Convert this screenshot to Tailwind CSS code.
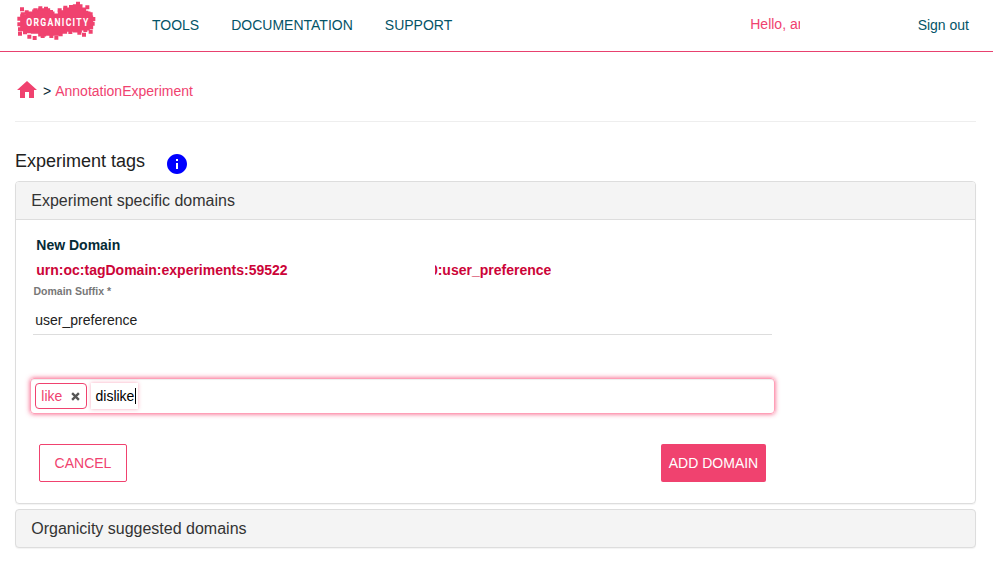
<!DOCTYPE html>
<html lang="en">
<head>
<meta charset="utf-8">
<title>Organicity - Experiment tags</title>
<script src="https://cdn.jsdelivr.net/npm/@tailwindcss/browser@4"></script>
</head>
<body class="bg-white text-[14px] leading-5 text-[#212121] font-['Liberation_Sans',Arial,sans-serif] h-[564px] overflow-hidden">
<header class="h-[52px] border-b border-[#e8416f] flex items-start text-[#045467]">
  <svg class="ml-[10px] w-[95px] h-[50px] shrink-0" viewBox="0 0 285 150" role="img" aria-label="Organicity">
    <g fill="#f0426f" stroke="#f0426f">
      <path stroke-width="7" d="M34 46H50V38H70V32H86V28H117V38H130V44H147V34H163V26H192V16H214V26H225V38H238V50H246V84H236V88H212V94H192V92H168V98H147V104H105V106H88V98H66V96H48V90H34Z"/>
      <path fill="none" stroke-width="12" stroke-linecap="square" d="M28 56h0M28 73h0M38 43h0M36 28h0M50 37h0M76 31h0M91 25h0M108 26h0M123 36h0M149 31h0M166 23h0M183 21h0M204 11h0M232 22h0M229 38h0M242 43h0M250 57h0M248 71h0M242 95h0M226 90h0M222 104h0M208 98h0M181 96h0M152 103h0M139 113h0M124 108h0M98 108h0M74 114h0M58 110h0M45 97h0M30 101h0M30 88h0"/>
    </g>
    <g transform="translate(49 79) scale(.74 1)"><text fill="#fff" font-family="Roboto, sans-serif" font-size="35" font-weight="700" textLength="251">ORGANICITY</text></g>
  </svg>
  <nav class="ml-[47px] pt-[15px] flex gap-8"><a>TOOLS</a><a>DOCUMENTATION</a><a>SUPPORT</a></nav>
  <span class="ml-[298px] mt-[14px] w-[50px] overflow-hidden whitespace-nowrap text-[#f0426f]">Hello, an</span>
  <a class="ml-auto mr-6 pt-[15px]">Sign out</a>
</header>
<main class="ml-[15px] w-[961px]">
  <div class="h-[70px] border-b border-[#eee] flex pt-[26px]">
    <svg class="w-6 h-6" viewBox="0 0 24 24" fill="#f0426f"><path d="M10 20v-6h4v6h5v-8h3L12 3 2 12h3v8z"/></svg>
    <span class="ml-1 mt-[3px] text-[#052a36]">&gt;</span><a class="ml-1 mt-[3px] text-[#f0426f]">AnnotationExperiment</a>
  </div>
  <div class="h-[59px] flex pt-[29px]">
    <h1 class="text-[18px] leading-5">Experiment tags</h1>
    <svg class="ml-5 mt-px w-6 h-6" viewBox="0 0 24 24" fill="#00f"><path d="M12 2C6.480 2 2 6.480 2 12s4.480 10 10 10 10-4.480 10-10S17.520 2 12 2zm1 15h-2v-6h2v6zm0-8h-2V7h2v2z"/></svg>
  </div>
  <section class="h-[323px] border border-[#ddd] rounded shadow-[0_1px_1px_rgba(0,0,0,0.05)]">
    <h2 class="h-[38px] pl-[15.3px] bg-[#f4f4f4] border-b border-[#ddd] rounded-t-[3px] text-[16px] leading-[37px] text-[#333]">Experiment specific domains</h2>
    <div class="ml-[14px] w-[746px]">
      <div class="pl-[6.3px] pt-[15px] font-bold">
        <div class="text-[#052a36]">New Domain</div>
        <div class="mt-[5px] flex text-[#cc0438]"><span class="w-[252px]">urn:oc:tagDomain:experiments:59522</span><span class="ml-[147px] w-[116px] overflow-hidden flex justify-end whitespace-nowrap">0:user_preference</span></div>
      </div>
      <label class="block ml-[3.5px] mt-[5px] h-[13px] text-[10.5px] leading-[13px] font-bold text-[#777]">Domain Suffix *</label>
      <div class="ml-[3px] mt-3 w-[739px] h-[25px] pl-[2.3px] border-b border-[#ddd]">user_preference</div>
      <div class="mt-[43px] w-[745px] h-[36px] rounded border border-[#ff9fb7] shadow-[inset_0_1px_1px_rgba(0,0,0,0.075),0_0_5px_rgba(245,65,111,0.85)] flex items-start p-1">
        <span class="h-[26px] w-[52px] rounded border border-[#f0426f] text-[#f0426f] pl-[5.3px] flex items-center">like<svg class="ml-[9px] w-[9px] h-[9px]" viewBox="0 0 8 8" fill="none" stroke="#555" stroke-width="2.1"><path d="M1 1l6 6M7 1L1 7"/></svg></span>
        <span class="ml-1 w-[47px] h-[26px] pl-[4.5px] shadow-[0_0_4px_rgba(245,65,111,0.45)] flex items-center text-black">dislike<i class="w-px h-4 bg-black shrink-0 ml-[0.5px]"></i></span>
      </div>
      <div class="mt-[30px] pl-[9px] w-[736px] flex justify-between">
        <button class="w-[88px] h-[38px] rounded-[2px] border border-[#f0426f] text-[#f0426f]">CANCEL</button>
        <button class="w-[105px] h-[38px] rounded-[2px] bg-[#f0426f] text-white">ADD DOMAIN</button>
      </div>
    </div>
  </section>
  <section class="mt-[5px] h-[39px] border border-[#ddd] rounded bg-[#f4f4f4] shadow-[0_1px_1px_rgba(0,0,0,0.05)]">
    <h2 class="pl-[15.3px] text-[16px] leading-[37px] text-[#333]">Organicity suggested domains</h2>
  </section>
</main>
</body>
</html>
